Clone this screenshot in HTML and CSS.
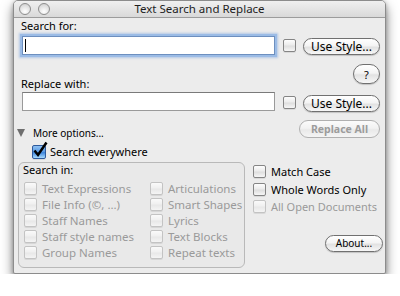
FILE: index.html
```html
<!DOCTYPE html>
<html>
<head>
<meta charset="utf-8">
<link rel="stylesheet" href="styles.css">
</head>
<body>
<div class="window">
  <div class="titlebar">
    <div class="lights"><span class="light"></span><span class="light"></span></div>
    <div class="title">Text Search and Replace</div>
    <div></div>
  </div>
  <div class="content">
    <div class="label first">Search for:</div>
    <div class="row r1">
      <div class="input focus"><span class="caret"></span></div>
      <span class="cb rowcb"></span>
      <div class="btn style">Use Style...</div>
    </div>
    <div class="row help">
      <div class="label">Replace with:</div>
      <div class="btn qbtn">?</div>
    </div>
    <div class="row r2">
      <div class="input"></div>
      <span class="cb rowcb"></span>
      <div class="btn style">Use Style...</div>
    </div>
    <div class="row more">
      <div class="disclose"><span class="tri"></span><span class="moretxt">More options...</span></div>
      <div class="btn small disabled replall">Replace All</div>
    </div>
    <div class="row everywhere">
      <span class="cb checked">
        <svg class="check" width="16" height="17" viewBox="0 0 16 17"><path d="M2.5 9.5 L6 14 L14.5 1.5" fill="none" stroke="#000" stroke-width="2.5" stroke-linejoin="miter"/></svg>
      </span>
      <span class="evtxt">Search everywhere</span>
    </div>
    <div class="row bottom">
      <div class="group">
        <div class="glabel">Search in:</div>
        <div class="items">
          <div class="item"><span class="cb dis"></span>Text Expressions</div>
          <div class="item"><span class="cb dis"></span>Articulations</div>
          <div class="item"><span class="cb dis"></span>File Info (©, ...)</div>
          <div class="item"><span class="cb dis"></span>Smart Shapes</div>
          <div class="item"><span class="cb dis"></span>Staff Names</div>
          <div class="item"><span class="cb dis"></span>Lyrics</div>
          <div class="item"><span class="cb dis"></span>Staff style names</div>
          <div class="item"><span class="cb dis"></span>Text Blocks</div>
          <div class="item"><span class="cb dis"></span>Group Names</div>
          <div class="item"><span class="cb dis"></span>Repeat texts</div>
        </div>
      </div>
      <div class="opts">
        <div class="opt"><span class="cb"></span>Match Case</div>
        <div class="opt"><span class="cb"></span>Whole Words Only</div>
        <div class="opt off"><span class="cb dis"></span>All Open Documents</div>
        <div class="btn small about">About...</div>
      </div>
    </div>
  </div>
</div>
</body>
</html>
```

FILE: styles.css
```css
html, body {
  margin: 0;
  background: #fff;
}
body {
  font-family: "Noto Sans", "DejaVu Sans", sans-serif;
  font-size: 11px;
  color: #000;
}
.window {
  margin-left: 13px;
  width: 373px;
  height: 274px;
  box-sizing: border-box;
  border: 1px solid #8c8c8c;
  border-radius: 5px 5px 2px 2px;
  background: #ececec;
  box-shadow: 0 6px 12px rgba(0, 0, 0, 0.5), 0 1px 4px rgba(0, 0, 0, 0.25);
  display: flex;
  flex-direction: column;
  overflow: hidden;
}
.titlebar {
  height: 16px;
  flex: none;
  border-bottom: 1px solid #9c9c9c;
  background: linear-gradient(#f0f0f0, #d9d9d9);
  display: grid;
  grid-template-columns: 1fr auto 1fr;
  align-items: center;
}
.lights {
  display: flex;
  gap: 7px;
  margin-left: 5px;
}
.light {
  width: 10px;
  height: 10px;
  border: 1px solid #8d8d8d;
  border-radius: 50%;
  background: radial-gradient(circle at 50% 75%, #ffffff 0%, #e6e6e6 50%, #c9c9c9 100%);
}
.title {
  font-size: 11.5px;
  line-height: 16px;
  color: #1e1e1e;
}
.content {
  display: flex;
  flex-direction: column;
  flex: 1;
}
.row {
  display: flex;
  align-items: flex-start;
}
.label {
  line-height: 14px;
  margin-left: 7px;
}
.label.first {
  margin-top: 1px;
}
.input {
  box-sizing: border-box;
  width: 253px;
  height: 19px;
  margin-left: 8px;
  background: #fff;
  border: 1px solid #9a9a9a;
  border-top-color: #7a7a7a;
  display: flex;
  align-items: center;
}
.input.focus {
  border-color: #6d8fbf;
  box-shadow: 0 0 0 2px #9cbce6, 0 0 2px 3px rgba(140, 175, 225, 0.6);
}
.caret {
  width: 1px;
  height: 13px;
  background: #000;
  margin-left: 2px;
}
.r1 {
  margin-top: 3px;
  height: 19px;
}
.rowcb {
  margin-left: 8px;
  margin-top: 3px;
}
.cb {
  box-sizing: border-box;
  width: 13px;
  height: 13px;
  flex: none;
  border: 1px solid #858585;
  border-radius: 2px;
  background: linear-gradient(#fdfdfd 0%, #ececec 45%, #dedede 55%, #f6f6f6 100%);
  box-shadow: 0 1px 0 rgba(0, 0, 0, 0.08);
}
.cb.dis {
  border-color: #c3c3c3;
  background: linear-gradient(#fafafa 0%, #f0f0f0 45%, #e8e8e8 55%, #f4f4f4 100%);
}
.btn {
  box-sizing: border-box;
  height: 17px;
  border: 1px solid #707070;
  border-radius: 9px;
  background: linear-gradient(#ffffff 0%, #f4f4f4 45%, #e2e2e2 55%, #f7f7f7 100%);
  box-shadow: 0 1px 1px rgba(0, 0, 0, 0.18);
  display: flex;
  align-items: center;
  justify-content: center;
  font-size: 11px;
  flex: none;
}
.style {
  width: 77px;
  margin-left: 7px;
  margin-top: 2px;
  font-size: 12px;
}
.help {
  margin-top: 9px;
  height: 27px;
  justify-content: space-between;
}
.help .label {
  align-self: flex-end;
}
.qbtn {
  width: 27px;
  height: 20px;
  border-radius: 10px;
  margin-right: 5px;
  font-size: 11px;
}
.r2 {
  margin-top: 1px;
  height: 19px;
}
.r2 .rowcb {
  margin-top: 4px;
}
.r2 .style {
  margin-top: 3px;
}
.more {
  margin-top: 9px;
  height: 18px;
  justify-content: space-between;
  align-items: flex-end;
}
.disclose {
  display: flex;
  align-items: flex-end;
  margin-left: 3px;
}
.tri {
  width: 0;
  height: 0;
  border-left: 4.5px solid transparent;
  border-right: 4.5px solid transparent;
  border-top: 8px solid #6e6e6e;
  margin-bottom: 1px;
}
.moretxt {
  font-size: 10px;
  line-height: 12px;
  margin-left: 8px;
  margin-bottom: -1px;
}
.small {
  font-size: 10px;
}
.replall {
  width: 81px;
  height: 18px;
  margin-right: 5px;
  font-weight: bold;
  font-size: 10.5px;
}
.disabled {
  color: #9c9c9c;
  border-color: #b0b0b0;
  box-shadow: none;
  background: linear-gradient(#fbfbfb 0%, #f2f2f2 45%, #e9e9e9 55%, #f4f4f4 100%);
}
.everywhere {
  margin-top: 7px;
  height: 14px;
  align-items: center;
}
.cb.checked {
  width: 14px;
  height: 14px;
  margin-left: 18px;
  border-color: #2f5a9c;
  background: linear-gradient(#8fc1f2 0%, #5e9ee6 45%, #3f86dc 55%, #a9dcff 100%);
  position: relative;
}
.check {
  position: absolute;
  left: -1px;
  top: -5px;
}
.evtxt {
  margin-left: 4px;
  line-height: 14px;
}
.bottom {
  margin-top: 3px;
}
.group {
  box-sizing: border-box;
  width: 227px;
  height: 106px;
  margin-left: 4px;
  border: 1px solid #b9b9b9;
  border-radius: 6px;
  background: #e9e9e9;
  padding-left: 4px;
}
.glabel {
  line-height: 14px;
}
.items {
  margin-top: 3px;
  margin-left: 1px;
  display: grid;
  grid-template-columns: 126px 1fr;
  grid-auto-rows: 16.2px;
  font-size: 11.5px;
}
.item {
  display: flex;
  align-items: center;
  gap: 5px;
  color: #9a9a9a;
}
.opts {
  display: flex;
  flex-direction: column;
  margin-left: 8px;
  padding-top: 1px;
  flex: 1;
}
.opt {
  height: 17.5px;
  display: flex;
  align-items: center;
  gap: 5px;
}
.opt.off {
  color: #9a9a9a;
}
.about {
  width: 58px;
  height: 17px;
  align-self: flex-end;
  margin-top: 19px;
  margin-right: 2px;
}
```
